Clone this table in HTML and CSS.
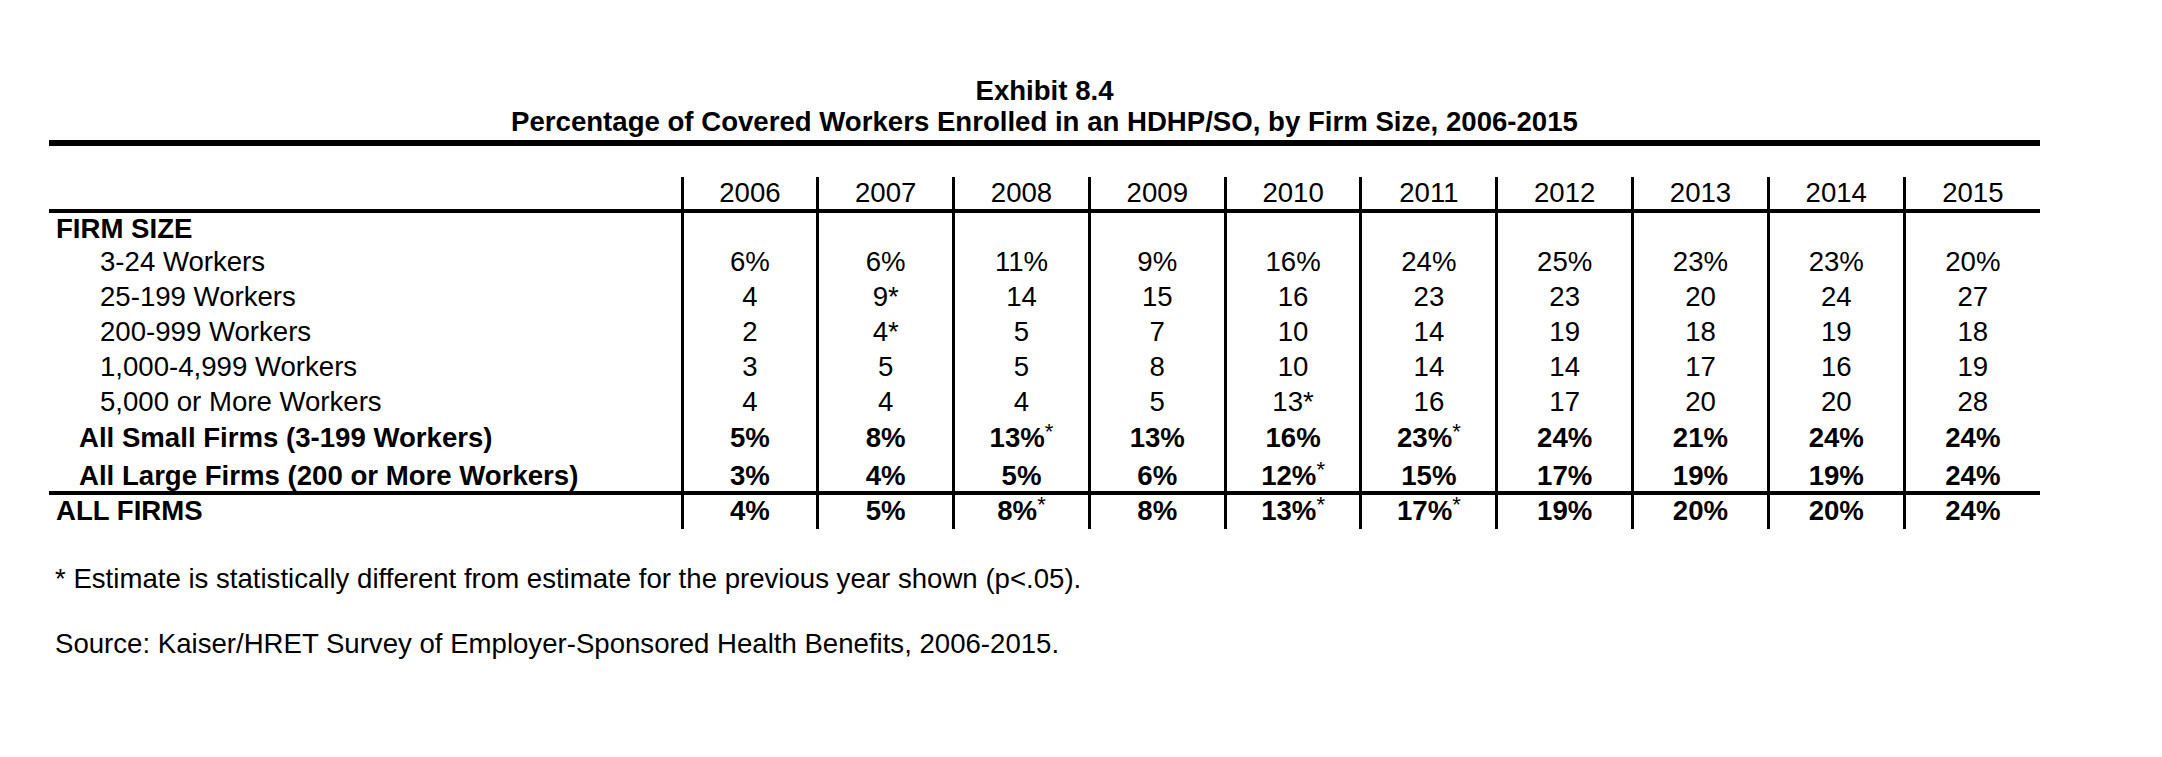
FILE: index.html
```html
<!DOCTYPE html>
<html>
<head>
<meta charset="utf-8">
<link rel="stylesheet" href="styles.css">
</head>
<body>
<div class="exhibit">
  <div class="heading">
    <div class="heading-line">Exhibit 8.4</div>
    <div class="heading-line">Percentage of Covered Workers Enrolled in an HDHP/SO, by Firm Size, 2006-2015</div>
  </div>
  <table class="data">
    <colgroup>
      <col class="col-label">
      <col class="col-year"><col class="col-year"><col class="col-year"><col class="col-year"><col class="col-year">
      <col class="col-year"><col class="col-year"><col class="col-year"><col class="col-year"><col class="col-year">
    </colgroup>
    <thead>
      <tr class="row-head">
        <th class="label"></th>
        <th>2006</th><th>2007</th><th>2008</th><th>2009</th><th>2010</th>
        <th>2011</th><th>2012</th><th>2013</th><th>2014</th><th>2015</th>
      </tr>
    </thead>
    <tbody>
      <tr class="row-section">
        <td class="label lvl0 bold">FIRM SIZE</td>
        <td></td><td></td><td></td><td></td><td></td><td></td><td></td><td></td><td></td><td></td>
      </tr>
      <tr class="row-sub">
        <td class="label lvl2">3-24 Workers</td>
        <td>6%</td><td>6%</td><td>11%</td><td>9%</td><td>16%</td><td>24%</td><td>25%</td><td>23%</td><td>23%</td><td>20%</td>
      </tr>
      <tr class="row-sub">
        <td class="label lvl2">25-199 Workers</td>
        <td>4</td><td>9*</td><td>14</td><td>15</td><td>16</td><td>23</td><td>23</td><td>20</td><td>24</td><td>27</td>
      </tr>
      <tr class="row-sub">
        <td class="label lvl2">200-999 Workers</td>
        <td>2</td><td>4*</td><td>5</td><td>7</td><td>10</td><td>14</td><td>19</td><td>18</td><td>19</td><td>18</td>
      </tr>
      <tr class="row-sub">
        <td class="label lvl2">1,000-4,999 Workers</td>
        <td>3</td><td>5</td><td>5</td><td>8</td><td>10</td><td>14</td><td>14</td><td>17</td><td>16</td><td>19</td>
      </tr>
      <tr class="row-sub">
        <td class="label lvl2">5,000 or More Workers</td>
        <td>4</td><td>4</td><td>4</td><td>5</td><td>13*</td><td>16</td><td>17</td><td>20</td><td>20</td><td>28</td>
      </tr>
      <tr class="row-small bold">
        <td class="label lvl1">All Small Firms (3-199 Workers)</td>
        <td>5%</td><td>8%</td><td>13%<span class="star">*</span></td><td>13%</td><td>16%</td><td>23%<span class="star">*</span></td><td>24%</td><td>21%</td><td>24%</td><td>24%</td>
      </tr>
      <tr class="row-large bold">
        <td class="label lvl1">All Large Firms (200 or More Workers)</td>
        <td>3%</td><td>4%</td><td>5%</td><td>6%</td><td>12%<span class="star">*</span></td><td>15%</td><td>17%</td><td>19%</td><td>19%</td><td>24%</td>
      </tr>
      <tr class="row-all bold">
        <td class="label lvl0">ALL FIRMS</td>
        <td>4%</td><td>5%</td><td>8%<span class="star">*</span></td><td>8%</td><td>13%<span class="star">*</span></td><td>17%<span class="star">*</span></td><td>19%</td><td>20%</td><td>20%</td><td>24%</td>
      </tr>
    </tbody>
  </table>
  <p class="note note-first">* Estimate is statistically different from estimate for the previous year shown (p&lt;.05).</p>
  <p class="note">Source: Kaiser/HRET Survey of Employer-Sponsored Health Benefits, 2006-2015.</p>
</div>
</body>
</html>
```

FILE: styles.css
```css
html, body {
  margin: 0;
  padding: 0;
  background: #ffffff;
}

body {
  font-family: "Liberation Sans", Arial, sans-serif;
  font-size: 27.6px;
  color: #000000;
}

.exhibit {
  width: 1991px;
  margin-left: 49px;
  padding-top: 75px;
}

.heading {
  font-weight: bold;
  text-align: center;
  line-height: 31px;
  padding-bottom: 3px;
  border-bottom: 6px solid #000;
}

.data {
  margin-top: 31px;
  width: 1991px;
  border-collapse: collapse;
  table-layout: fixed;
  line-height: 28px;
}

.col-label { width: 633px; }
.col-year { width: 135.8px; }

.data th,
.data td {
  padding: 0;
  text-align: center;
  font-weight: normal;
  white-space: nowrap;
  border-left: 3px solid #000;
  vertical-align: middle;
}

.data th.label,
.data td.label {
  border-left: none;
  text-align: left;
}

.bold td,
td.bold {
  font-weight: bold;
}

.star {
  font-weight: normal;
  font-size: 0.8em;
  vertical-align: 0.35em;
  line-height: 0;
}

.row-head th {
  height: 32px;
  border-bottom: 4px solid #000;
}

.row-section td { height: 31px; }
.row-sub td { height: 35px; }
.row-small td { height: 37px; }
.row-large td {
  height: 30px;
  padding-top: 5px;
  border-bottom: 4px solid #000;
}
.row-all td {
  height: 31px;
  padding-bottom: 3px;
}

.lvl0 { padding-left: 7px !important; }
.lvl1 { padding-left: 30px !important; }
.lvl2 { padding-left: 51px !important; }

.note {
  margin: 35px 0 0 6px;
  line-height: 30px;
}
```
